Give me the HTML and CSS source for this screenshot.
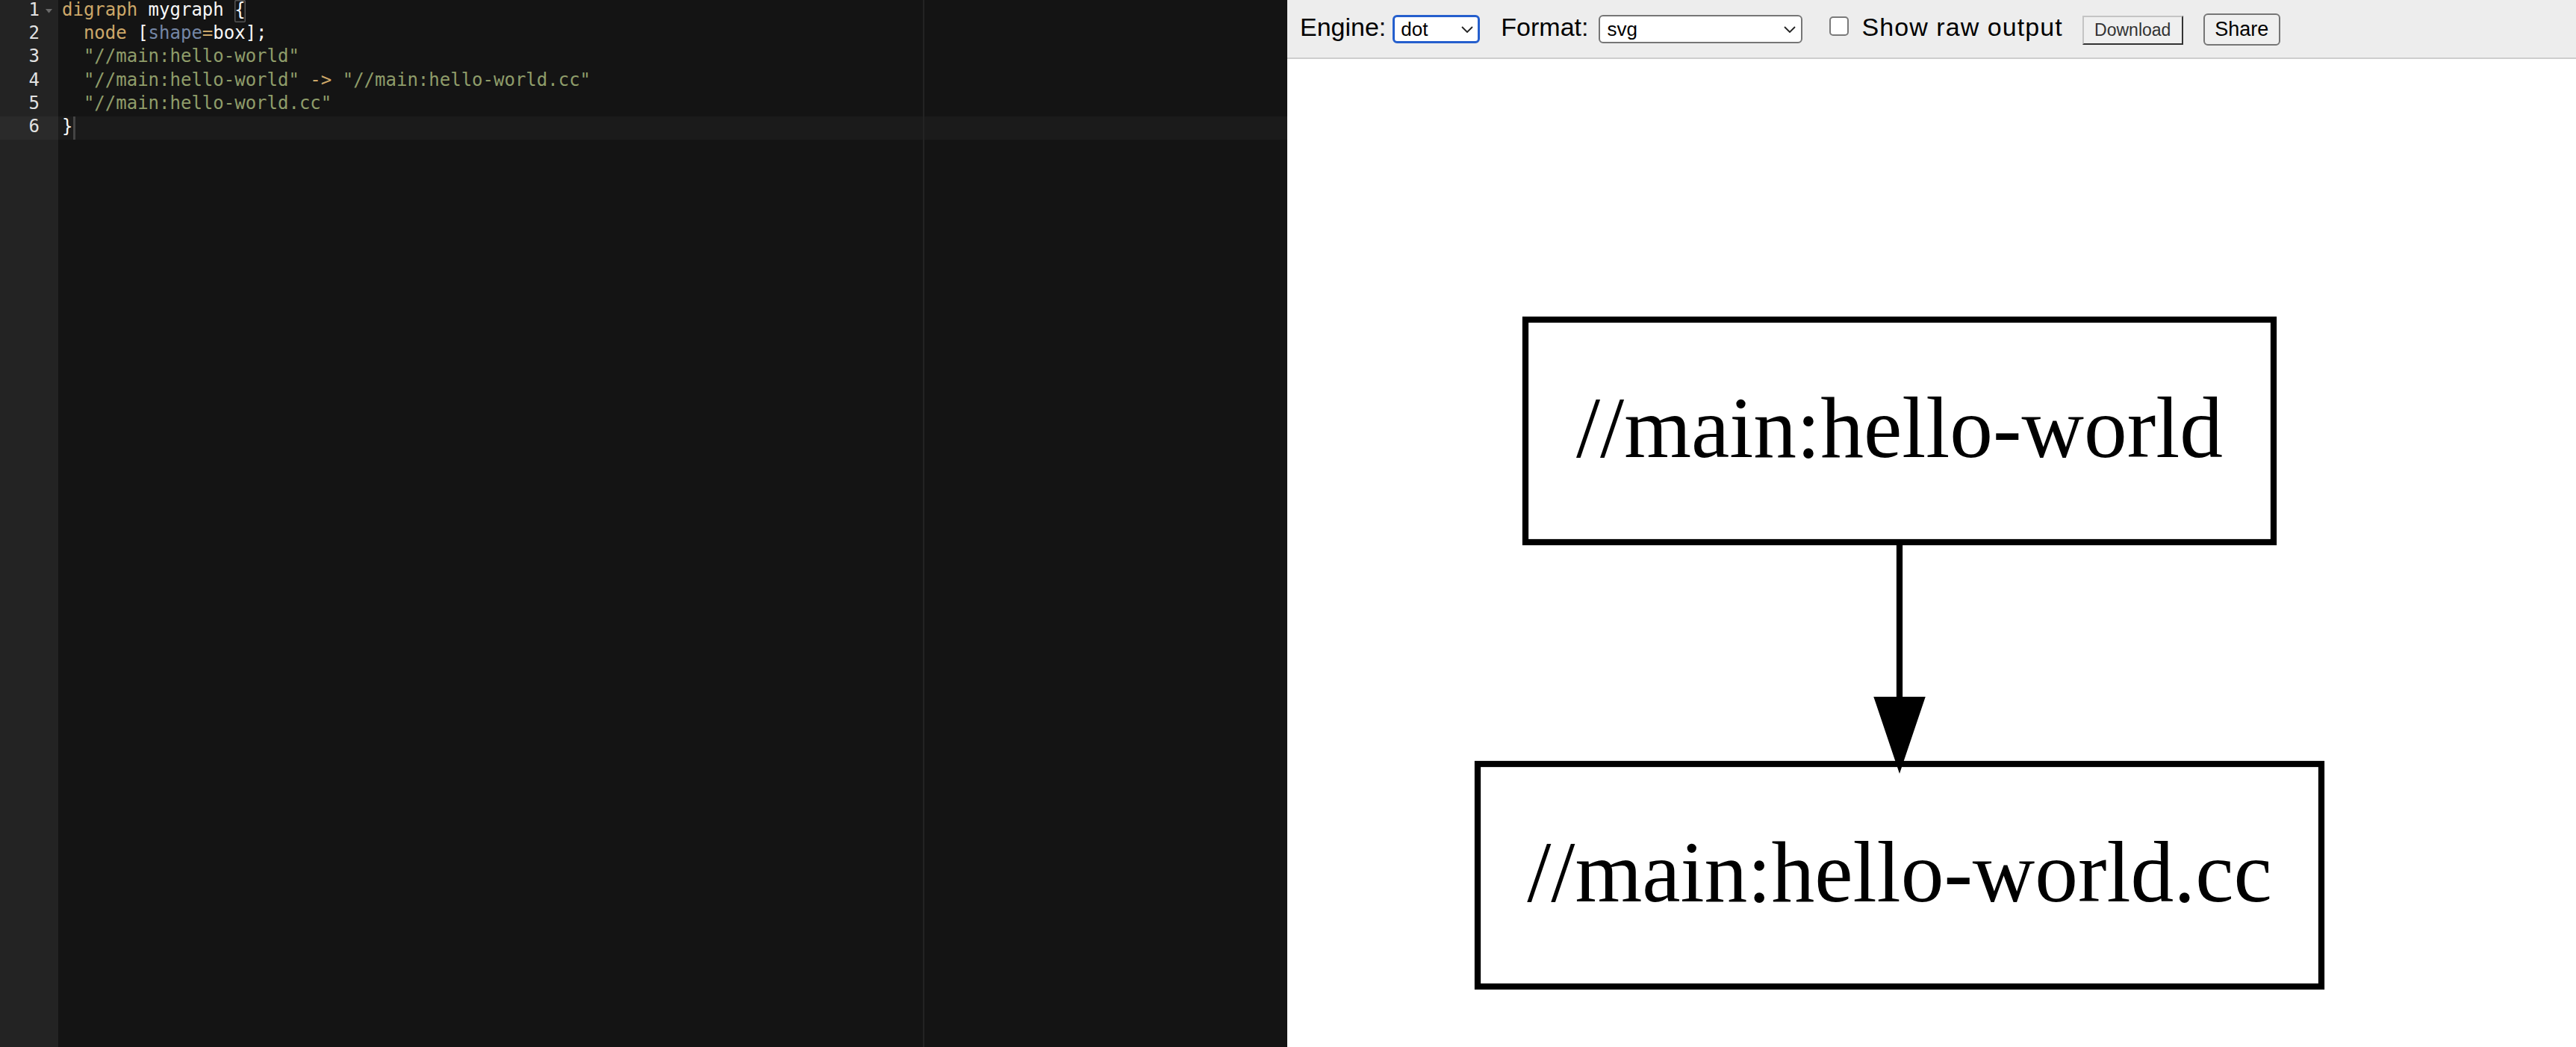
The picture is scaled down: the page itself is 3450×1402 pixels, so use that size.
FILE: index.html
```html
<!DOCTYPE html>
<html>
<head>
<meta charset="utf-8">
<title>Graphviz editor</title>
<link rel="stylesheet" href="styles.css">
</head>
<body>
<div class="editor">
  <div class="gutter">
    <div class="grow"><span class="num">1</span><span class="fold"><svg width="9" height="6" viewBox="0 0 9 6"><polygon points="0,0 9,0 4.5,5.5" fill="#6a6a6a"/></svg></span></div>
    <div class="grow"><span class="num">2</span><span class="fold"></span></div>
    <div class="grow"><span class="num">3</span><span class="fold"></span></div>
    <div class="grow"><span class="num">4</span><span class="fold"></span></div>
    <div class="grow"><span class="num">5</span><span class="fold"></span></div>
    <div class="grow active"><span class="num">6</span><span class="fold"></span></div>
  </div>
  <div class="code">
    <div class="line"><span class="kw">digraph</span> mygraph <span class="bracket">{</span></div>
    <div class="line">  <span class="kw">node</span> [<span class="var">shape</span><span class="kw">=</span>box];</div>
    <div class="line">  <span class="str">"//main:hello-world"</span></div>
    <div class="line">  <span class="str">"//main:hello-world"</span> <span class="kw">-&gt;</span> <span class="str">"//main:hello-world.cc"</span></div>
    <div class="line">  <span class="str">"//main:hello-world.cc"</span></div>
    <div class="line active">}<span class="cursor"></span></div>
    <div class="print-margin"></div>
  </div>
</div>
<div class="output">
  <div class="toolbar">
    <span class="lbl lbl-engine">Engine:</span>
    <span class="sel sel-engine">
      <select class="focus"><option>dot</option></select>
      <svg class="chev" width="16" height="9" viewBox="0 0 16 9"><polyline points="1,1 8,8 15,1" fill="none" stroke="#222" stroke-width="1.8"/></svg>
    </span>
    <span class="lbl lbl-format">Format:</span>
    <span class="sel sel-format">
      <select><option>svg</option></select>
      <svg class="chev" width="16" height="9" viewBox="0 0 16 9"><polyline points="1,1 8,8 15,1" fill="none" stroke="#222" stroke-width="1.8"/></svg>
    </span>
    <input type="checkbox" class="chk">
    <span class="lbl lbl-raw">Show raw output</span>
    <button class="btn-download">Download</button>
    <button class="btn-share">Share</button>
  </div>
  <div class="graph">
    <svg width="1726" height="1323" viewBox="0 0 1726 1323">
      <rect x="319" y="349" width="1002" height="298" fill="none" stroke="#000" stroke-width="8.25"/>
      <text x="820" y="533" text-anchor="middle" class="gtext">//main:hello-world</text>
      <line x1="820" y1="647" x2="820" y2="860" stroke="#000" stroke-width="8.25"/>
      <polygon points="791,858 820,944 849,858" fill="#000" stroke="#000" stroke-width="8.25"/>
      <rect x="255" y="944" width="1130" height="298" fill="none" stroke="#000" stroke-width="8.25"/>
      <text x="820" y="1128" text-anchor="middle" class="gtext">//main:hello-world.cc</text>
    </svg>
  </div>
</div>
</body>
</html>
```

FILE: styles.css
```css
html, body {
  margin: 0;
  padding: 0;
}
body {
  width: 3450px;
  height: 1402px;
  overflow: hidden;
  display: flex;
  font-family: "Liberation Sans", Arial, sans-serif;
}

/* ---------- editor ---------- */
.editor {
  width: 1724px;
  flex: none;
  height: 1402px;
  display: flex;
  background: #141414;
  font-family: "DejaVu Sans Mono", "Liberation Mono", monospace;
  font-size: 24px;
}
.gutter {
  width: 78px;
  flex: none;
  background: #232323;
  color: #e2e2e2;
}
.grow {
  height: 31.2px;
  line-height: 27px;
  display: flex;
  justify-content: flex-end;
}
.grow.active {
  background: #2a2a2a;
}
.fold {
  width: 25px;
  flex: none;
  box-sizing: border-box;
  padding: 10px 0 0 8px;
  line-height: 0;
}
.code {
  flex: 1;
  position: relative;
}
.line {
  height: 31.2px;
  line-height: 27px;
  padding-left: 5px;
  white-space: pre;
  color: #f8f8f8;
}
.line.active {
  background: #1b1b1b;
}
.kw { color: #cda869; }
.var { color: #7587a6; }
.str { color: #8f9d6a; }
.bracket {
  display: inline-block;
  vertical-align: top;
  height: 30px;
  box-shadow: inset 0 0 0 1.5px rgba(255, 255, 255, 0.28);
  border-radius: 2px;
}
.cursor {
  display: inline-block;
  vertical-align: top;
  width: 3px;
  height: 31px;
  margin-left: 1px;
  background: #444;
}
.print-margin {
  position: absolute;
  top: 0;
  bottom: 0;
  left: 1158px;
  width: 2px;
  background: #232323;
}

/* ---------- output ---------- */
.output {
  flex: 1;
  display: flex;
  flex-direction: column;
  background: #fff;
}
.toolbar {
  height: 79px;
  flex: none;
  box-sizing: border-box;
  background: #ededed;
  border-bottom: 2px solid #cecece;
  display: flex;
  align-items: baseline;
  padding: 17px 0 0 17px;
}
.lbl {
  font-size: 34px;
  color: #000;
}
.lbl-engine { margin-right: 9px; }
.lbl-format { margin-right: 14px; }
.lbl-raw { margin-left: 17px; letter-spacing: 1.07px; }

.sel {
  position: relative;
  display: inline-block;
}
.sel select {
  -webkit-appearance: none;
  appearance: none;
  box-sizing: border-box;
  height: 38px;
  margin: 0;
  background: #fff;
  font-family: "Liberation Sans", Arial, sans-serif;
  font-size: 26px;
  color: #000;
  border: 2px solid #767676;
  border-radius: 6px;
  padding: 0 0 0 9px;
  outline: none;
}
.sel select.focus {
  border: 3px solid #255fcd;
  padding-left: 8px;
}
.sel-engine { margin-right: 28px; }
.sel-engine select { width: 117px; }
.sel-format select { width: 273px; }
.chev {
  position: absolute;
  right: 9px;
  top: 15px;
  pointer-events: none;
}
.chk {
  -webkit-appearance: none;
  appearance: none;
  width: 26px;
  height: 26px;
  margin: 0 0 0 36px;
  box-sizing: border-box;
  border: 2px solid #7a7a7a;
  border-radius: 5px;
  background: #fff;
}
.btn-download {
  margin-left: 26px;
  width: 135px;
  height: 39px;
  box-sizing: border-box;
  padding: 0;
  font-family: "Liberation Sans", Arial, sans-serif;
  font-size: 23px;
  color: #333;
  background: #efefef;
  border: 2px solid;
  border-color: #c4c4c4 #333 #333 #c4c4c4;
  border-radius: 0;
}
.btn-share {
  margin-left: 27px;
  width: 103px;
  height: 43px;
  box-sizing: border-box;
  padding: 0;
  font-family: "Liberation Sans", Arial, sans-serif;
  font-size: 27px;
  color: #000;
  background: #efefef;
  border: 2px solid #767676;
  border-radius: 6px;
}
.graph {
  flex: 1;
  overflow: hidden;
}
.graph svg {
  display: block;
}
.gtext {
  font-family: "Liberation Serif", "Times New Roman", serif;
  font-size: 115.5px;
  fill: #000;
}
```
